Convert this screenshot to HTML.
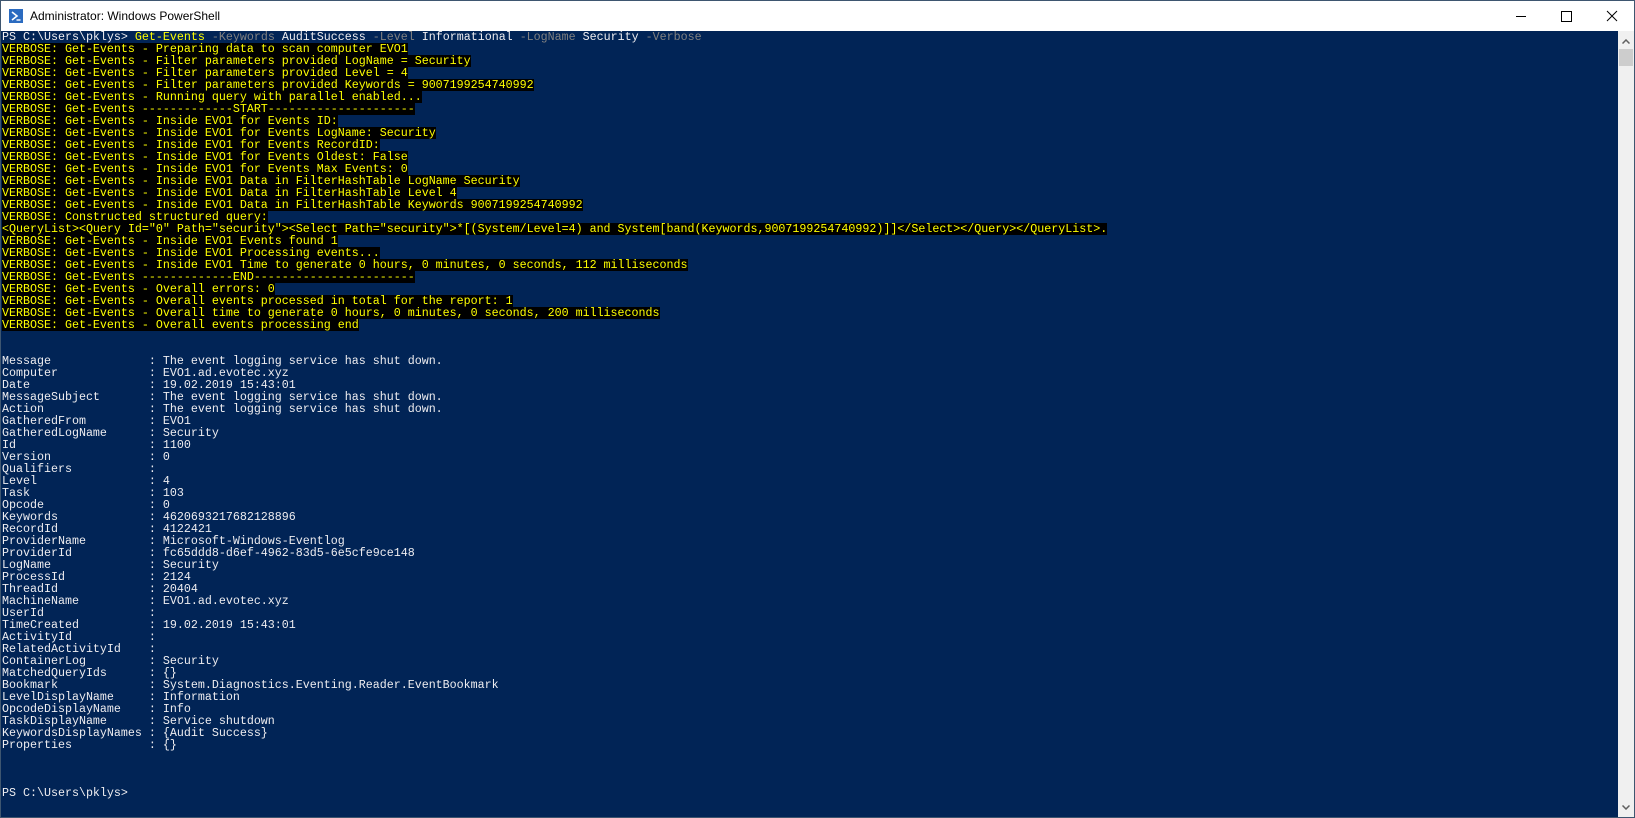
<!DOCTYPE html>
<html><head><meta charset="utf-8"><style>
html,body{margin:0;padding:0;width:1635px;height:818px;overflow:hidden;background:#fff}
#win{position:absolute;left:0;top:0;width:1633px;height:816px;border:1px solid #3e5670;border-top:1px solid #3e5670;background:#fff}
#title{position:absolute;left:0;top:0;width:1633px;height:30px;background:#fff}
#title .t{position:absolute;left:29px;top:8px;font:12px "Liberation Sans",sans-serif;color:#000}
#con{position:absolute;left:0;top:30px;width:1617px;height:786px;background:#012456;overflow:hidden}
#sb{position:absolute;left:1617px;top:30px;width:16px;height:786px;background:#f0f0f0}
.l{height:12px;line-height:12px;white-space:pre;font-family:"Liberation Mono",monospace;font-size:11.67px;color:#eeedf0;padding-left:1px}
.v{background:#000;color:#ffff00;display:inline-block;height:12px}
.y{color:#ffff00}.g{color:#808080}.w{color:#eeedf0}
</style></head><body>
<div id="win">
<div id="title">
<svg style="position:absolute;left:8px;top:8px" width="14" height="14" viewBox="0 0 14 14"><rect width="14" height="14" fill="#2b6bc0"/><path d="M3 3l5 4-5 4" stroke="#fff" stroke-width="1.6" fill="none"/><path d="M7.5 11h4" stroke="#fff" stroke-width="1.4"/></svg>
<span class="t">Administrator: Windows PowerShell</span>
<div style="position:absolute;left:1515px;top:15px;width:10px;height:1px;background:#000"></div>
<div style="position:absolute;left:1560px;top:10px;width:9px;height:9px;border:1px solid #000"></div>
<svg style="position:absolute;left:1605px;top:9px" width="12" height="12" viewBox="0 0 12 12"><path d="M1 1L11 11M11 1L1 11" stroke="#000" stroke-width="1"/></svg>
</div>
<div id="con">
<div class="l">PS C:\Users\pklys&gt; <span class="y">Get-Events</span> <span class="g">-Keywords</span> AuditSuccess <span class="g">-Level</span> Informational <span class="g">-LogName</span> Security <span class="g">-Verbose</span></div>
<div class="l"><span class="v">VERBOSE: Get-Events - Preparing data to scan computer EVO1</span></div>
<div class="l"><span class="v">VERBOSE: Get-Events - Filter parameters provided LogName = Security</span></div>
<div class="l"><span class="v">VERBOSE: Get-Events - Filter parameters provided Level = 4</span></div>
<div class="l"><span class="v">VERBOSE: Get-Events - Filter parameters provided Keywords = 9007199254740992</span></div>
<div class="l"><span class="v">VERBOSE: Get-Events - Running query with parallel enabled...</span></div>
<div class="l"><span class="v">VERBOSE: Get-Events -------------START---------------------</span></div>
<div class="l"><span class="v">VERBOSE: Get-Events - Inside EVO1 for Events ID:</span></div>
<div class="l"><span class="v">VERBOSE: Get-Events - Inside EVO1 for Events LogName: Security</span></div>
<div class="l"><span class="v">VERBOSE: Get-Events - Inside EVO1 for Events RecordID:</span></div>
<div class="l"><span class="v">VERBOSE: Get-Events - Inside EVO1 for Events Oldest: False</span></div>
<div class="l"><span class="v">VERBOSE: Get-Events - Inside EVO1 for Events Max Events: 0</span></div>
<div class="l"><span class="v">VERBOSE: Get-Events - Inside EVO1 Data in FilterHashTable LogName Security</span></div>
<div class="l"><span class="v">VERBOSE: Get-Events - Inside EVO1 Data in FilterHashTable Level 4</span></div>
<div class="l"><span class="v">VERBOSE: Get-Events - Inside EVO1 Data in FilterHashTable Keywords 9007199254740992</span></div>
<div class="l"><span class="v">VERBOSE: Constructed structured query:</span></div>
<div class="l"><span class="v">&lt;QueryList&gt;&lt;Query Id="0" Path="security"&gt;&lt;Select Path="security"&gt;*[(System/Level=4) and System[band(Keywords,9007199254740992)]]&lt;/Select&gt;&lt;/Query&gt;&lt;/QueryList&gt;.</span></div>
<div class="l"><span class="v">VERBOSE: Get-Events - Inside EVO1 Events found 1</span></div>
<div class="l"><span class="v">VERBOSE: Get-Events - Inside EVO1 Processing events...</span></div>
<div class="l"><span class="v">VERBOSE: Get-Events - Inside EVO1 Time to generate 0 hours, 0 minutes, 0 seconds, 112 milliseconds</span></div>
<div class="l"><span class="v">VERBOSE: Get-Events -------------END-----------------------</span></div>
<div class="l"><span class="v">VERBOSE: Get-Events - Overall errors: 0</span></div>
<div class="l"><span class="v">VERBOSE: Get-Events - Overall events processed in total for the report: 1</span></div>
<div class="l"><span class="v">VERBOSE: Get-Events - Overall time to generate 0 hours, 0 minutes, 0 seconds, 200 milliseconds</span></div>
<div class="l"><span class="v">VERBOSE: Get-Events - Overall events processing end</span></div>
<div class="l"> </div>
<div class="l"> </div>
<div class="l">Message              : The event logging service has shut down.</div>
<div class="l">Computer             : EVO1.ad.evotec.xyz</div>
<div class="l">Date                 : 19.02.2019 15:43:01</div>
<div class="l">MessageSubject       : The event logging service has shut down.</div>
<div class="l">Action               : The event logging service has shut down.</div>
<div class="l">GatheredFrom         : EVO1</div>
<div class="l">GatheredLogName      : Security</div>
<div class="l">Id                   : 1100</div>
<div class="l">Version              : 0</div>
<div class="l">Qualifiers           :</div>
<div class="l">Level                : 4</div>
<div class="l">Task                 : 103</div>
<div class="l">Opcode               : 0</div>
<div class="l">Keywords             : 4620693217682128896</div>
<div class="l">RecordId             : 4122421</div>
<div class="l">ProviderName         : Microsoft-Windows-Eventlog</div>
<div class="l">ProviderId           : fc65ddd8-d6ef-4962-83d5-6e5cfe9ce148</div>
<div class="l">LogName              : Security</div>
<div class="l">ProcessId            : 2124</div>
<div class="l">ThreadId             : 20404</div>
<div class="l">MachineName          : EVO1.ad.evotec.xyz</div>
<div class="l">UserId               :</div>
<div class="l">TimeCreated          : 19.02.2019 15:43:01</div>
<div class="l">ActivityId           :</div>
<div class="l">RelatedActivityId    :</div>
<div class="l">ContainerLog         : Security</div>
<div class="l">MatchedQueryIds      : {}</div>
<div class="l">Bookmark             : System.Diagnostics.Eventing.Reader.EventBookmark</div>
<div class="l">LevelDisplayName     : Information</div>
<div class="l">OpcodeDisplayName    : Info</div>
<div class="l">TaskDisplayName      : Service shutdown</div>
<div class="l">KeywordsDisplayNames : {Audit Success}</div>
<div class="l">Properties           : {}</div>
<div class="l"> </div>
<div class="l"> </div>
<div class="l"> </div>
<div class="l">PS C:\Users\pklys&gt;</div>
</div>
<div id="sb">
<svg style="position:absolute;left:4px;top:8px" width="8" height="5" viewBox="0 0 8 5"><path d="M0.5 4.5L4 1L7.5 4.5" stroke="#606060" stroke-width="1.5" fill="none"/></svg>
<div style="position:absolute;left:1px;top:18px;width:14px;height:17px;background:#cdcdcd"></div>
<svg style="position:absolute;left:4px;top:774px" width="8" height="5" viewBox="0 0 8 5"><path d="M0.5 0.5L4 4L7.5 0.5" stroke="#606060" stroke-width="1.5" fill="none"/></svg>
</div>
</div>
</body></html>
